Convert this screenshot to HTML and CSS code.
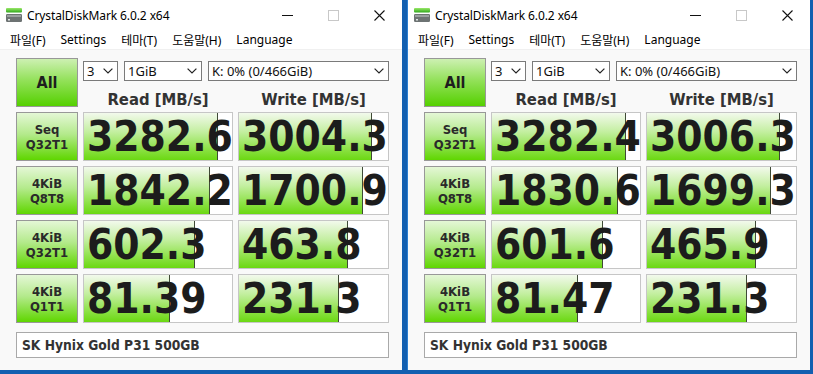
FILE: index.html
```html
<!DOCTYPE html>
<html>
    <head>
        <title>CrystalDiskMark</title>
        <link rel="stylesheet" href="styles.css">
    </head>
    <body>
        <div class="desktop">
            <div class="window">
                <div class="titlebar">
                    <svg class="app-icon" width="16" height="16" viewBox="0 0 16 16">
                        <defs>
                            <linearGradient id="g1" x1="0" y1="0" x2="0" y2="1">
                                <stop offset="0" stop-color="#9be86a"/>
                                <stop offset="1" stop-color="#2ea81a"/>
                            </linearGradient>
                        </defs>
                        <rect x="0" y="1" width="16" height="4.5" rx="1" fill="url(#g1)"/>
                        <rect x="0" y="7" width="16" height="8" rx="1.2" fill="#6d7373"/>
                        <rect x="1" y="8" width="14" height="2" fill="#9aa0a0"/>
                        <rect x="2" y="12" width="2" height="1.5" fill="#dfe3e3"/>
                    </svg>
                    <span class="title">CrystalDiskMark 6.0.2 x64</span>
                    <div class="controls">
                        <span class="ctl"><span class="ctl-min"></span></span>
                        <span class="ctl"><span class="ctl-max"></span></span>
                        <span class="ctl">
                            <svg width="11" height="11" viewBox="0 0 11 11"><path d="M0.5 0.5L10.5 10.5M10.5 0.5L0.5 10.5" stroke="#111" stroke-width="1.1" fill="none"/></svg>
                        </span>
                    </div>
                </div>
                <div class="menubar">
                    <span>파일(F)</span><span>Settings</span><span>테마(T)</span><span>도움말(H)</span><span>Language</span>
                </div>
                <div class="content">
                    <div class="btn btn-all">All</div>
                    <div class="selects">
                        <div class="sel sel-count">3<svg viewBox="0 0 10 6"><path d="M0.6 0.6L5 5L9.4 0.6" stroke="#222" stroke-width="1.2" fill="none"/></svg></div>
                        <div class="sel sel-size">1GiB<svg viewBox="0 0 10 6"><path d="M0.6 0.6L5 5L9.4 0.6" stroke="#222" stroke-width="1.2" fill="none"/></svg></div>
                        <div class="sel sel-drive">K: 0% (0/466GiB)<svg viewBox="0 0 10 6"><path d="M0.6 0.6L5 5L9.4 0.6" stroke="#222" stroke-width="1.2" fill="none"/></svg></div>
                    </div>
                    <div class="col-head head-read">Read [MB/s]</div>
                    <div class="col-head head-write">Write [MB/s]</div>

                    <div class="btn">Seq<br>Q32T1</div>
                    <div class="meter"><div class="bar" style="width:90%"></div><span class="val">3282.6</span></div>
                    <div class="meter"><div class="bar" style="width:89%"></div><span class="val">3004.3</span></div>

                    <div class="btn">4KiB<br>Q8T8</div>
                    <div class="meter"><div class="bar" style="width:85%"></div><span class="val">1842.2</span></div>
                    <div class="meter"><div class="bar" style="width:83%"></div><span class="val">1700.9</span></div>

                    <div class="btn">4KiB<br>Q32T1</div>
                    <div class="meter"><div class="bar" style="width:75%"></div><span class="val">602.3</span></div>
                    <div class="meter"><div class="bar" style="width:73%"></div><span class="val">463.8</span></div>

                    <div class="btn">4KiB<br>Q1T1</div>
                    <div class="meter"><div class="bar" style="width:58%"></div><span class="val">81.39</span></div>
                    <div class="meter"><div class="bar" style="width:67%"></div><span class="val">231.3</span></div>

                    <div class="drive">SK Hynix Gold P31 500GB</div>
                </div>
            </div>

            <div class="window window-right">
                <div class="titlebar">
                    <svg class="app-icon" width="16" height="16" viewBox="0 0 16 16">
                        <defs>
                            <linearGradient id="g2" x1="0" y1="0" x2="0" y2="1">
                                <stop offset="0" stop-color="#9be86a"/>
                                <stop offset="1" stop-color="#2ea81a"/>
                            </linearGradient>
                        </defs>
                        <rect x="0" y="1" width="16" height="4.5" rx="1" fill="url(#g2)"/>
                        <rect x="0" y="7" width="16" height="8" rx="1.2" fill="#6d7373"/>
                        <rect x="1" y="8" width="14" height="2" fill="#9aa0a0"/>
                        <rect x="2" y="12" width="2" height="1.5" fill="#dfe3e3"/>
                    </svg>
                    <span class="title">CrystalDiskMark 6.0.2 x64</span>
                    <div class="controls">
                        <span class="ctl"><span class="ctl-min"></span></span>
                        <span class="ctl"><span class="ctl-max"></span></span>
                        <span class="ctl">
                            <svg width="11" height="11" viewBox="0 0 11 11"><path d="M0.5 0.5L10.5 10.5M10.5 0.5L0.5 10.5" stroke="#111" stroke-width="1.1" fill="none"/></svg>
                        </span>
                    </div>
                </div>
                <div class="menubar">
                    <span>파일(F)</span><span>Settings</span><span>테마(T)</span><span>도움말(H)</span><span>Language</span>
                </div>
                <div class="content">
                    <div class="btn btn-all">All</div>
                    <div class="selects">
                        <div class="sel sel-count">3<svg viewBox="0 0 10 6"><path d="M0.6 0.6L5 5L9.4 0.6" stroke="#222" stroke-width="1.2" fill="none"/></svg></div>
                        <div class="sel sel-size">1GiB<svg viewBox="0 0 10 6"><path d="M0.6 0.6L5 5L9.4 0.6" stroke="#222" stroke-width="1.2" fill="none"/></svg></div>
                        <div class="sel sel-drive">K: 0% (0/466GiB)<svg viewBox="0 0 10 6"><path d="M0.6 0.6L5 5L9.4 0.6" stroke="#222" stroke-width="1.2" fill="none"/></svg></div>
                    </div>
                    <div class="col-head head-read">Read [MB/s]</div>
                    <div class="col-head head-write">Write [MB/s]</div>

                    <div class="btn">Seq<br>Q32T1</div>
                    <div class="meter"><div class="bar" style="width:90%"></div><span class="val">3282.4</span></div>
                    <div class="meter"><div class="bar" style="width:89%"></div><span class="val">3006.3</span></div>

                    <div class="btn">4KiB<br>Q8T8</div>
                    <div class="meter"><div class="bar" style="width:85%"></div><span class="val">1830.6</span></div>
                    <div class="meter"><div class="bar" style="width:83%"></div><span class="val">1699.3</span></div>

                    <div class="btn">4KiB<br>Q32T1</div>
                    <div class="meter"><div class="bar" style="width:75%"></div><span class="val">601.6</span></div>
                    <div class="meter"><div class="bar" style="width:73%"></div><span class="val">465.9</span></div>

                    <div class="btn">4KiB<br>Q1T1</div>
                    <div class="meter"><div class="bar" style="width:58%"></div><span class="val">81.47</span></div>
                    <div class="meter"><div class="bar" style="width:67%"></div><span class="val">231.3</span></div>

                    <div class="drive">SK Hynix Gold P31 500GB</div>
                </div>
            </div>
        </div>
    </body>
</html>
```

FILE: styles.css
```css
body {
    margin: 0;
    background-color: #125fb0;
    font-family: "Noto Sans", "Noto Sans CJK KR", sans-serif;
    color: #000;
}

.desktop {
    display: flex;
    gap: 5px;
    height: 374px;
}

.window {
    box-sizing: border-box;
    width: 402px;
    height: 370px;
    background-color: #fff;
    display: flex;
    flex-direction: column;
}

.window-right {
    width: 403px;
    border-left: 1px solid #2d7fcf;
}

/* title bar */
.titlebar {
    height: 30px;
    display: flex;
    align-items: center;
}

.app-icon {
    margin-left: 6px;
    flex: none;
}

.title {
    margin-left: 5px;
    font-size: 12px;
    letter-spacing: -0.1px;
}

.controls {
    margin-left: auto;
    display: flex;
    height: 30px;
}

.ctl {
    width: 46px;
    display: flex;
    align-items: center;
    justify-content: center;
}

.ctl-min {
    width: 11px;
    height: 1px;
    background-color: #111;
}

.ctl-max {
    width: 9px;
    height: 9px;
    border: 1px solid #c8c8c8;
}

/* menu */
.menubar {
    height: 19px;
    padding-left: 10px;
    display: flex;
    align-items: center;
    gap: 15px;
    font-size: 12px;
    border-bottom: 1px solid #f0f0f0;
}

/* main panel */
.content {
    flex: 1;
    padding: 8px 13px 0 16px;
    background-color: #f9f9f9;
    display: grid;
    grid-template-columns: 62px 150px 151px;
    grid-template-rows: 49px repeat(4, 49px) 30px;
    column-gap: 5px;
    row-gap: 5px;
    font-family: "DejaVu Sans Condensed", "DejaVu Sans", sans-serif;
    font-weight: bold;
}

.btn {
    box-sizing: border-box;
    border: 1px solid #989898;
    background: linear-gradient(#e4f7d6 0%, #b4ea8c 45%, #5fd600 100%);
    display: flex;
    flex-direction: column;
    align-items: center;
    justify-content: center;
    font-family: "Liberation Sans Narrow", "DejaVu Sans Condensed", sans-serif;
    font-size: 13px;
    line-height: 15px;
    color: #2a2a2a;
    text-align: center;
}

.btn-all {
    grid-column: 1;
    grid-row: 1;
    background: linear-gradient(#cdf0b2 0%, #93e15a 45%, #55d000 100%);
    font-family: "DejaVu Sans Condensed", sans-serif;
    font-size: 16px;
    color: #1e1e1e;
}

.selects {
    grid-column: 2 / 4;
    grid-row: 1;
    align-self: start;
    margin-top: 3px;
    display: flex;
    gap: 6px;
}

.sel {
    box-sizing: border-box;
    height: 20px;
    border: 1px solid #7a7a7a;
    background-color: #fff;
    display: flex;
    align-items: center;
    padding: 0 4px 0 3px;
    font-family: "Noto Sans", sans-serif;
    font-weight: normal;
    font-size: 13px;
    color: #111;
}

.sel svg {
    width: 10px;
    height: 6px;
    margin-left: auto;
}

.sel-count {
    width: 35px;
}

.sel-size {
    width: 78px;
}

.sel-drive {
    flex: 1;
}

.col-head {
    grid-row: 1;
    align-self: end;
    margin-bottom: -3px;
    text-align: center;
    font-size: 16.5px;
    line-height: 20px;
    color: #333;
}

.head-read {
    grid-column: 2;
}

.head-write {
    grid-column: 3;
}

.meter {
    box-sizing: border-box;
    border: 1px solid #c6c6c6;
    background-color: #fff;
    display: grid;
    overflow: hidden;
}

.bar {
    grid-area: 1 / 1;
    box-sizing: border-box;
    height: 100%;
    border-right: 1px solid #3f4a36;
    background: linear-gradient(#f2f9ec 0%, #c3efa0 40%, #8fe24a 75%, #6bd812 100%);
}

.val {
    grid-area: 1 / 1;
    align-self: center;
    padding-left: 3px;
    font-size: 42px;
    line-height: 1;
    color: #1c1c1c;
    white-space: nowrap;
}

.drive {
    grid-column: 1 / 4;
    margin-top: 4px;
    box-sizing: border-box;
    border: 1px solid #a9a9a9;
    background-color: #fff;
    display: flex;
    align-items: center;
    padding-left: 5px;
    font-size: 13.7px;
    color: #333;
}
```
